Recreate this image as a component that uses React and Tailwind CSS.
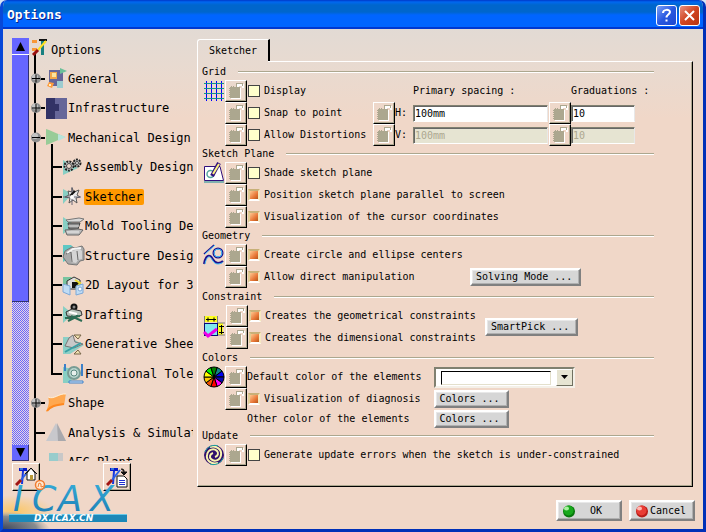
import React from "react";

const LEVELS = [
  { label: "General", level: 1, mark: "plus", icon: "general" },
  { label: "Infrastructure", level: 1, mark: "plus", icon: "infra" },
  { label: "Mechanical Design", level: 1, mark: "minus", icon: "mech" },
  { label: "Assembly Design", level: 2, icon: "gears" },
  { label: "Sketcher", level: 2, icon: "sketcher", selected: true },
  { label: "Mold Tooling Design", level: 2, icon: "mold" },
  { label: "Structure Design", level: 2, icon: "structure" },
  { label: "2D Layout for 3D Design", level: 2, icon: "layout" },
  { label: "Drafting", level: 2, icon: "drafting" },
  { label: "Generative Sheetmetal", level: 2, icon: "sheet" },
  { label: "Functional Tolerancing", level: 2, icon: "func", lastChild: true },
  { label: "Shape", level: 1, mark: "plus", icon: "shape" },
  { label: "Analysis & Simulation", level: 1, icon: "analysis" },
  { label: "AEC Plant", level: 1, icon: "aec", last: true },
];

const TEAL = "#88cfc4";

const ICONS = {
  general: (
    <>
      <rect x="3" y="2" width="14" height="16" fill="#666699" />
      <path d="M14 0l7 3-7 3z" fill="#6cc09a" />
      <rect x="4" y="4" width="7" height="7" fill="#f4a648" />
      <rect x="6" y="5" width="4" height="4" fill="#fce4a0" />
      <rect x="11" y="13" width="6" height="7" fill="#9cccd0" />
      <path d="M1 18l2-4 5 1-2 5z" fill="#ff9c3c" />
      <rect x="3" y="16" width="2" height="2" fill="#fff0c0" />
    </>
  ),
  infra: (
    <>
      <rect width="21" height="21" fill="#666699" />
      <path d="M0 1l1-1h8v6h4v7H9v8H0z" fill="#333366" />
    </>
  ),
  mech: (
    <>
      <path d="M0 2l3 1 16 7-16 7-3 1z" fill="#98cc98" />
      <path d="M12 7l8 3-8 4z" fill="#b8e4dc" />
    </>
  ),
  gears: (
    <>
      <path d="M0 3l15 8-15 7z" fill={TEAL} />
      <circle cx="6" cy="9" r="4.5" fill="#d8d8d8" stroke="#222" strokeWidth="2" strokeDasharray="2 1" />
      <circle cx="14" cy="6" r="3.5" fill="#c0c0c0" stroke="#222" strokeWidth="2" strokeDasharray="2 1" />
      <circle cx="6" cy="9" r="2.5" fill="#ecd8cc" stroke="#444" />
      <circle cx="14" cy="6" r="1.5" fill="#eee" stroke="#444" />
    </>
  ),
  sketcher: (
    <>
      <path d="M0 3l9 5-9 10z" fill={TEAL} />
      <path d="M9 2l2 4 5-2-2 5 3 2-4 1 1 5-4-3-4 3 1-5-5-1 4-2-1-4 4 1z" fill="#e8e8e8" stroke="#555" />
      <path d="M9 1v18M0 11h18" stroke="#667" />
      <path d="M12 5L7 10" stroke="#111" strokeWidth="2" />
      <circle cx="9" cy="11" r="2" fill="#fff" />
    </>
  ),
  mold: (
    <>
      <path d="M0 1l12 8-12 9z" fill={TEAL} />
      <path d="M3 4l13-2 5 1-4 3H5z" fill="#d8d8d8" stroke="#777" />
      <path d="M5 7h12l-2 6H6z" fill="#888" stroke="#444" />
      <path d="M2 14l13-1 5 1-4 5H4z" fill="#bbb" stroke="#666" />
      <path d="M5 10h11M4 16h12" stroke="#eee" />
    </>
  ),
  structure: (
    <>
      <path d="M0 0h8l8 8-16 9z" fill="#60c8c4" />
      <path d="M2 6l7-4 3 1 7-2 2 3v11l-4 1-3 4-9-1-5-7z" fill="#aaa" stroke="#777" />
      <path d="M8 6l9-2 2 2v8l-4 1-2 3-5-1z" fill="#d4d4d4" />
      <path d="M3 9l5-2 1 10M14 6l1 9" fill="none" stroke="#666" />
      <path d="M4 8l6-4 8-1" fill="none" stroke="#f4f4f4" strokeWidth="2" />
    </>
  ),
  layout: (
    <>
      <path d="M0 2h8l8 7H0z" fill="#78c4a0" />
      <path d="M4 6l7-4 6 3v9H4z" fill="#ddd" stroke="#333" />
      <path d="M9 7h7v6H9z" fill="#111" />
      <path d="M12 5l5 3-4 5" fill="none" stroke="#eadb30" strokeWidth="2" />
      <path d="M0 9l7 2v9l-7-3zM13 11l7-2v9l-7 2z" fill="#c0dcf4" stroke="#7ca8d8" />
      <circle cx="17" cy="14" r="2" fill="#fff" stroke="#7ca8d8" />
    </>
  ),
  drafting: (
    <>
      <path d="M0 2l10 8-10 9z" fill={TEAL} />
      <circle cx="11" cy="3" r="2.5" fill="#888" stroke="#111" strokeWidth="2" />
      <path d="M3 8l6-3 9 2 1 4-5 2-10-1z" fill="#b8c4bc" stroke="#333" />
      <path d="M2 14l15-2M5 17l10-5M8 12l11 5" stroke="#2b6c54" strokeWidth="2" />
      <path d="M6 8l8 2" stroke="#fff" strokeWidth="2" />
    </>
  ),
  sheet: (
    <>
      <path d="M0 3h6l15 8-14 9H0z" fill="#8ccfc6" />
      <path d="M6 4l4-3 2 7 8 2-9 4-9-2z" fill="#c8c8c8" stroke="#777" />
      <path d="M11 1h7l-3 4zM11 20h7l-3-4z" fill="#f0e0b0" stroke="#776648" />
      <path d="M2 18L18 9" stroke="#38a0a4" strokeWidth="2" />
    </>
  ),
  func: (
    <>
      <path d="M0 4l10 2-2 14H0z" fill={TEAL} />
      <circle cx="11" cy="10" r="6" fill="#b8d4cc" stroke="#789c94" strokeWidth="2" />
      <circle cx="11" cy="10" r="3" fill="#e8f0ec" stroke="#5c8880" />
      <path d="M2 1v7M19 1v12" stroke="#3c80c8" strokeWidth="2" />
      <path d="M6 18h14v2H6z" fill="#dfe8f4" stroke="#3c80c8" />
    </>
  ),
  shape: (
    <>
      <path d="M2 4c6 3 11-4 18-3-1 4-1 7-2 11-6 0-11 1-18 7 2-6 4-9 2-15z" fill="#ffa850" />
      <path d="M1 18c3-5 9-6 17-7" fill="none" stroke="#ff8820" strokeWidth="2" />
      <path d="M2 4c6 3 11-4 18-3" fill="none" stroke="#fff0d8" />
    </>
  ),
  analysis: (
    <>
      <path d="M10 1l10 18H0z" fill="#c8c8cc" />
      <path d="M11 1l9 18H12z" fill="#a8a8ac" />
    </>
  ),
  aec: (
    <>
      <rect x="3" y="1" width="9" height="19" fill="#98cccc" />
      <rect x="12" y="1" width="5" height="19" fill="#c8c8c8" />
    </>
  ),
};

function TreeIcon({ name }) {
  return (
    <svg width="21" height="21" viewBox="0 0 21 21" className="shrink-0 overflow-visible" aria-hidden="true">
      {ICONS[name]}
    </svg>
  );
}

function Gutter({ branch = true, mark, end }) {
  return (
    <svg className="h-full w-[14px] shrink-0 overflow-visible" aria-hidden="true" shapeRendering="crispEdges">
      <line x1="4" x2="4" y1="0" y2={end ? "50%" : "100%"} stroke="#000" strokeWidth="2" />
      {branch && <line x1="3" x2="14" y1="50%" y2="50%" stroke="#000" strokeWidth="2" />}
      {mark && (
        <g shapeRendering="auto">
          <circle cx="5" cy="50%" r="5" fill="#8e8e8e" />
          <circle cx="4" cy="45%" r="3" fill="#c4c4c4" />
          <line x1="1" x2="9" y1="50%" y2="50%" stroke="#000" />
          {mark === "plus" && <line x1="5" x2="5" y1="36%" y2="64%" stroke="#000" />}
        </g>
      )}
    </svg>
  );
}

function TreeRow({ item }) {
  return (
    <li
      role="treeitem"
      aria-level={item.level + 1}
      aria-selected={!!item.selected}
      className="flex h-[29px] shrink-0 items-center whitespace-nowrap even:h-[30px]"
    >
      {item.level === 1 ? (
        <Gutter mark={item.mark} end={item.last} />
      ) : (
        <span className="flex h-full shrink-0 gap-[3px]">
          <Gutter branch={false} />
          <Gutter end={item.lastChild} />
        </span>
      )}
      <span className="relative ml-px flex h-full shrink-0 items-center">
        {item.mark === "minus" && <span className="absolute bottom-0 left-[5px] h-2 w-[2px] bg-black" />}
        <TreeIcon name={item.icon} />
      </span>
      <span className={item.selected ? "rounded-[2px] bg-[#ff9900] px-px leading-4" : "ml-px leading-4"}>
        {item.label}
      </span>
    </li>
  );
}

function ToolIcon({ kind }) {
  return (
    <svg width="22" height="22" viewBox="0 0 22 22" aria-hidden="true">
      <path d="M4 2h8v3H4z" fill="#0818c8" />
      <path d="M8 5l-1 13" stroke="#1838e0" strokeWidth="2" />
      <path d="M5 3h3" stroke="#58d0f0" />
      <path d="M14 4L6 14" stroke="#2a60e8" strokeWidth="2" />
      <path d="M6 14l-5 5" stroke="#a01414" strokeWidth="3" />
      {kind === "home" ? (
        <>
          <path d="M12 7v7h8V7l-4-5z" fill="#fff" stroke="#111" />
          <path d="M10 8l6-6 6 6" fill="none" stroke="#111" />
          <rect x="15" y="9" width="3" height="5" fill="#b89838" />
        </>
      ) : (
        <>
          <path d="M11 10h7l3 3v8H11z" fill="#fff" stroke="#111" />
          <path d="M13 14.500h6M13 16.500h6M13 18.500h6" stroke="#2030d0" />
          <path d="M15 3c3 0 3 1 3 3M15 6l3 3 3-3z" fill="#111" stroke="#111" />
        </>
      )}
    </svg>
  );
}

function ToolButton({ label, kind }) {
  return (
    <button
      type="button"
      aria-label={label}
      className="flex size-7 items-center justify-center border border-t-white border-r-black border-b-black border-l-white shadow-[inset_-1px_-1px_0_#aca78f]"
    >
      <ToolIcon kind={kind} />
    </button>
  );
}

function Lock() {
  return (
    <button
      type="button"
      aria-label="Lock setting"
      className="h-[22px] w-[22px] shrink-0 border border-t-white border-r-black border-b-black border-l-white shadow-[inset_-1px_-1px_0_#aca78f]"
    >
      <svg width="20" height="20" viewBox="0 0 20 20" shapeRendering="crispEdges" aria-hidden="true">
        <path d="M5 7h10v11H5z" fill="#fff" />
        <path d="M11 3h7v4h-2V5h-3v3h-2z" fill="#fff" />
        <path d="M10 2h7v3h-1V3h-5v3h-1z" fill="#aca78f" />
        <path d="M4 6h10v11H4z" fill="#aca78f" />
        <path d="M3 7v1h1V7zM3 9v1h1V9zM3 11v1h1v-1zM3 13v1h1v-1zM3 15v1h1v-1zM5 5h1v1H5zM7 5h1v1H7z" fill="#aca78f" />
      </svg>
    </button>
  );
}

function Check({ label, checked }) {
  return (
    <label className="flex items-center gap-1 pl-px whitespace-nowrap">
      <input
        type="checkbox"
        defaultChecked={checked}
        className="size-3 shrink-0 appearance-none border border-[#444] bg-[#ffffcc] checked:border-2 checked:border-t-[#c8b078] checked:border-r-[#f6e8c0] checked:border-b-white checked:border-l-[#e0cc94] checked:bg-[linear-gradient(135deg,#ffc890,#e87838_60%,#b85818)]"
      />
      {label}
    </label>
  );
}

function OptionRow({ label, checked }) {
  return (
    <div className="flex h-[22px] items-center">
      <Lock />
      <Check label={label} checked={checked} />
    </div>
  );
}

function Section({ title, icon, middle, children }) {
  return (
    <section>
      <div className="flex h-4 items-center gap-3">
        <h2 className="leading-3">{title}</h2>
        <span className="h-[2px] flex-1 border-b border-white bg-[#aca78f]" />
      </div>
      <div className="flex">
        <div className={middle ? "w-6 shrink-0 self-center pl-px" : "w-[23px] shrink-0 pl-px"}>{icon}</div>
        <div className="min-w-0 flex-1 leading-3">{children}</div>
      </div>
    </section>
  );
}

const BEVEL =
  "border-2 border-t-white border-r-[#808080] border-b-[#808080] border-l-white bg-[#d6d6d6] shadow-[inset_-1px_-1px_0_#b0b0b0,inset_1px_1px_0_#e8e8e8] whitespace-nowrap";

function PushButton({ children }) {
  return (
    <button type="button" className={`${BEVEL} h-[18px] pr-[7px] pl-1 leading-3`}>
      {children}
    </button>
  );
}

const FIELD =
  "h-[17px] min-w-0 border border-t-[#808070] border-l-[#808070] border-r-[#e8e8e8] border-b-white bg-white pl-px shadow-[inset_1px_1px_0_#666] outline-none disabled:bg-[#e6e4d2] disabled:text-[#aca78f]";

function SpacingRow({ label, axis, disabled }) {
  return (
    <div className="flex h-[22px] items-center pr-[19px]">
      <div className="flex w-[148px] shrink-0 items-center">
        <Lock />
        <Check label={label} />
      </div>
      <Lock />
      <label htmlFor={`spacing-${axis}`} className="w-[18px] shrink-0">
        {axis}:
      </label>
      <input id={`spacing-${axis}`} className={`${FIELD} mr-px w-0 flex-1`} defaultValue="100mm" disabled={disabled} />
      <Lock />
      <input aria-label={`Graduations ${axis}`} className={`${FIELD} w-16`} defaultValue="10" disabled={disabled} />
    </div>
  );
}

const GridIcon = (
  <svg width="22" height="22" viewBox="0 0 22 22" shapeRendering="crispEdges" aria-hidden="true">
    <path d="M1 3.500h20M1 8.500h20M1 13.500h20M1 18.500h20" stroke="#109090" />
    <path d="M3.500 1v20M8.500 1v20M13.500 1v20M18.500 1v20" stroke="#0000ff" />
    <path d="M2 3.500h20M2 8.500h20M2 13.500h20M2 18.500h20" stroke="#109090" strokeDasharray="3 2" />
  </svg>
);

const PlaneIcon = (
  <svg width="22" height="22" viewBox="0 0 22 22" aria-hidden="true">
    <path d="M1.500 4.500H17l3.500 14h-19z" fill="#fff" stroke="#30107c" />
    <path d="M1 20h20" stroke="#108c98" />
    <circle cx="7.500" cy="12" r="3.500" fill="none" stroke="#58a8a0" strokeWidth="1.500" />
    <path d="M16 1L9 14" stroke="#30107c" strokeWidth="4" />
    <path d="M16 2l-6 10" stroke="#fff480" strokeWidth="2" />
  </svg>
);

const CurveIcon = (
  <svg width="22" height="22" viewBox="0 0 22 22" fill="none" aria-hidden="true">
    <path d="M1 10l10-9" stroke="#20108c" strokeWidth="1.500" />
    <path d="M2 10l10-9" stroke="#40c0f8" />
    <circle cx="15" cy="9" r="4.500" stroke="#20108c" strokeWidth="2" />
    <circle cx="15" cy="9" r="4" stroke="#40c0f8" />
    <path d="M1 20c1-6 3-9 6-8s3 7 8 7c3 0 5-2 5-2" stroke="#20108c" strokeWidth="2" />
    <path d="M2 20c1-5 3-8 5-7s3 7 8 7c3 0 5-2 5-2" stroke="#40c0f8" />
  </svg>
);

const ConstraintIcon = (
  <svg width="22" height="22" viewBox="0 0 22 22" aria-hidden="true">
    <path d="M1 0h14v6H1zM15 7h5v12h-5z" fill="#ffff20" />
    <path d="M1.500 0v8M14.500 0v8M15 7h7M15 19h7" stroke="#808080" />
    <path d="M3 3.500h10M5 1.500v4M11 1.500v4M18.500 9v9M16 10.500h5M16 16.500h5" stroke="#000" />
    <rect x="1.500" y="7.500" width="13" height="12" fill="#80e8f0" stroke="#080878" />
    <path d="M1 16l4 4 9-7" fill="none" stroke="#ee00e8" strokeWidth="3" />
  </svg>
);

const WHEEL = ["#108484", "#0000f0", "#0808b0", "#ff00ff", "#ff0000", "#f05000", "#ffc800", "#ffff00", "#00f000", "#008000"];
const wedge = (i) => {
  const at = (k) => {
    const a = ((k * 36 - 72) * Math.PI) / 180;
    return `${(11 + 10 * Math.cos(a)).toFixed(2)} ${(11 + 10 * Math.sin(a)).toFixed(2)}`;
  };
  return `M11 11L${at(i)}A10 10 0 0 1 ${at(i + 1)}z`;
};
const WheelIcon = (
  <svg width="22" height="22" viewBox="0 0 22 22" aria-hidden="true">
    {WHEEL.map((c, i) => (
      <path key={c} d={wedge(i)} fill={c} stroke="#000" />
    ))}
  </svg>
);

const UpdateIcon = (
  <svg width="22" height="22" viewBox="0 0 22 22" fill="none" aria-hidden="true">
    <circle cx="11" cy="11" r="10" fill="#30106c" />
    <path d="M7 3c7-2 12 3 11 8-1 6-7 7-10 4-2-2-1-5 2-6" stroke="#f8f4b0" strokeWidth="2" />
    <path d="M15 19C8 21 3 16 4 11c1-6 7-7 10-4 2 2 1 5-2 6" stroke="#f8f4b0" strokeWidth="2" />
    <path d="M2 8c2-5 8-8 13-6M20 14c-2 5-8 8-13 6" stroke="#18a0a0" />
  </svg>
);

function Ball({ red }) {
  return (
    <svg width="14" height="14" viewBox="0 0 14 14" aria-hidden="true">
      <circle cx="7" cy="7.500" r="6" fill={red ? "#b81c18" : "#08780c"} />
      <circle cx="6.500" cy="6.500" r="5" fill={red ? "#e83c34" : "#18a81c"} />
      <ellipse cx="4.500" cy="4.500" rx="2.500" ry="2" fill={red ? "#ffb8b0" : "#a8f0a0"} />
    </svg>
  );
}

function Logo() {
  return (
    <svg width="128" height="54" viewBox="0 0 128 54" aria-label="ICAX" role="img">
      <defs>
        <radialGradient id="glow">
          <stop offset="0" stopColor="#ffc040" />
          <stop offset="1" stopColor="#ffc040" stopOpacity="0" />
        </radialGradient>
        <linearGradient id="ice" x1="0" y1="0" x2="0" y2="1">
          <stop offset="0" stopColor="#38b0dc" />
          <stop offset="1" stopColor="#1878b0" />
        </linearGradient>
        <radialGradient id="earth" cx="0" cy="1" r="1">
          <stop offset="0" stopColor="#40485c" />
          <stop offset=".7" stopColor="#888c90" />
          <stop offset="1" stopColor="#c0b4a8" stopOpacity="0" />
        </radialGradient>
      </defs>
      <ellipse cx="12" cy="36" rx="40" ry="16" fill="url(#glow)" opacity=".7" />
      <path d="M0 36c18 0 38 6 48 18H0z" fill="url(#earth)" />
      <text y="36" x="10 29 55 87" fontFamily="'DejaVu Sans'" fontStyle="italic" fontSize="35" fill="url(#ice)">
        ICAX
      </text>
      <rect x="6" y="39" width="118" height="8" fill="#1c88b8" />
      <path d="M6 39.500h118" stroke="#68c8e8" />
      <text x="31" y="46" fontFamily="'DejaVu Sans'" fontWeight="bold" fontStyle="italic" fontSize="9" fill="#fff">
        DX.ICAX.CN
      </text>
      <circle cx="37" cy="10" r="4.500" fill="#ffe8d0" stroke="#f07c30" strokeWidth="1.500" />
      <path d="M35 12l1-4 2 1v3l3-1" fill="none" stroke="#f07c30" />
    </svg>
  );
}

export default function App() {
  return (
    <div className="flex min-h-screen flex-col bg-[#d8e4f4] font-['DejaVu_Sans_Mono',monospace] text-[10px] text-black">
      <div className="relative flex flex-1 flex-col overflow-hidden rounded-t-[7px] border-x-[3px] border-b-[3px] border-[#0848d8] border-r-[#0030b8] border-b-[#0030b8] bg-[#f0d7c8]">
        <header className="-mx-[3px] flex h-[29px] shrink-0 items-center justify-between border-b-2 border-[#0038d0] bg-[linear-gradient(#0038c8_0,#0068f0_2px,#0066cc_5px,#0066cc_12px,#0065ff_15px,#0065ff_100%)] pt-[3px] pr-[6px] pl-[7px]">
          <h1 className="text-[13px] leading-4 font-bold text-white [text-shadow:1px_1px_#0c2080]">Options</h1>
          <div className="flex gap-[2px]">
            <button type="button" aria-label="Help" className="flex size-[21px] items-center justify-center rounded-[3px] border border-white bg-[linear-gradient(135deg,#7ca0f8,#2858e0_50%,#1c48d0)] text-white">
              <svg width="13" height="15" viewBox="0 0 13 15" fill="none" stroke="#fff" strokeWidth="2" aria-hidden="true">
                <path d="M3 5c0-4 7-4 7-1 0 2-3.500 2.500-3.500 5.500M6.500 11.500v2" />
              </svg>
            </button>
            <button type="button" aria-label="Close" className="flex size-[21px] items-center justify-center rounded-[3px] border border-white bg-[linear-gradient(135deg,#e89080,#d04420_50%,#b83410)]">
              <svg width="13" height="13" viewBox="0 0 13 13" stroke="#fff" strokeWidth="2" aria-hidden="true">
                <path d="M2 2l9 9M11 2l-9 9" />
              </svg>
            </button>
          </div>
        </header>

        <main className="flex flex-1 bg-[linear-gradient(#e2dad4,#e8dad0_36px,#f0d7c8_90px)] pt-[9px] pr-[10px] pl-[9px]">
          <div className="flex w-[181px] shrink-0 flex-col gap-[2px]">
            <div className="flex h-[423px]">
              <div className="flex w-[17px] shrink-0 flex-col">
                <button type="button" aria-label="Scroll up" className="flex h-[17px] shrink-0 items-center justify-center border-b border-white bg-[#6666ff]">
                  <svg width="9" height="9" aria-hidden="true"><path d="M4.500 0L9 9H0z" /></svg>
                </button>
                <div className="h-[247px] shrink-0 border-r border-b border-[#303070] bg-[#6666ff]" />
                <svg className="min-h-0 w-full flex-1" shapeRendering="crispEdges" aria-hidden="true">
                  <defs>
                    <pattern id="track" width="2" height="2" patternUnits="userSpaceOnUse">
                      <rect width="2" height="2" fill="#e8d8e0" />
                      <rect width="1" height="1" fill="#6666ff" />
                      <rect x="1" y="1" width="1" height="1" fill="#6666ff" />
                    </pattern>
                  </defs>
                  <rect width="100%" height="100%" fill="url(#track)" />
                </svg>
                <button type="button" aria-label="Scroll down" className="flex h-4 shrink-0 items-center justify-center border-r border-b border-[#303070] bg-[#6666ff]">
                  <svg width="9" height="9" aria-hidden="true"><path d="M4.500 9L9 0H0z" /></svg>
                </button>
              </div>
              <div className="ml-[2px] min-w-0 flex-1 overflow-hidden text-[12px]">
                <div className="flex h-[26px] items-start">
                  <svg width="17" height="26" viewBox="0 0 17 26" className="shrink-0" aria-hidden="true">
                    <path d="M3 14h2v12H3z" />
                    <path d="M1 2h5v3H1zM1 10h5v3H1z" fill="#f89838" />
                    <path d="M8 1h8v2H8z" fill="#111" />
                    <path d="M10 3h3v14h-3z" fill="#188080" />
                    <path d="M15 3l-8 9" stroke="#ffe020" strokeWidth="2" />
                    <path d="M7 12l-5 5" stroke="#981010" strokeWidth="3" />
                  </svg>
                  <span className="pl-[3px] leading-6">Options</span>
                </div>
                <ul role="tree" aria-label="Options" className="flex flex-col">
                  {LEVELS.map((item) => (
                    <TreeRow key={item.label} item={item} />
                  ))}
                </ul>
              </div>
            </div>
            <div className="flex gap-[63px]">
              <ToolButton label="Reset to defaults" kind="home" />
              <ToolButton label="Dump parameters" kind="dump" />
            </div>
          </div>

          <div className="mb-1 ml-1 flex min-w-0 flex-1 flex-col pt-px">
            <div role="tablist">
              <button
                type="button"
                role="tab"
                aria-selected="true"
                className="block h-[22px] w-[73px] rounded-tl-[3px] border-t border-r-2 border-l border-t-white border-r-black border-l-white"
              >
                Sketcher
              </button>
            </div>
            <div className="relative flex-1 border border-t-white border-r-black border-b-black border-l-white pt-[2px] pr-[38px] pl-1 shadow-[inset_-1px_-1px_0_#aca78f]">
              <span className="absolute -top-px left-0 h-px w-[70px] bg-[#e8dad0]" />
              <Section title="Grid" icon={GridIcon}>
                <div className="flex h-[22px] items-center pr-[19px]">
                  <div className="flex w-[188px] shrink-0 items-center">
                    <Lock />
                    <Check label="Display" />
                  </div>
                  <span className="flex-1 whitespace-nowrap">Primary spacing :</span>
                  <span className="w-16 whitespace-nowrap">Graduations :</span>
                </div>
                <SpacingRow label="Snap to point" axis="H" />
                <SpacingRow label="Allow Distortions" axis="V" disabled />
              </Section>

              <Section title="Sketch Plane" icon={PlaneIcon}>
                <OptionRow label="Shade sketch plane" />
                <OptionRow label="Position sketch plane parallel to screen" checked />
                <OptionRow label="Visualization of the cursor coordinates" checked />
              </Section>

              <Section title="Geometry" icon={CurveIcon}>
                <OptionRow label="Create circle and ellipse centers" checked />
                <div className="flex items-center">
                  <div className="w-[245px]">
                    <OptionRow label="Allow direct manipulation" checked />
                  </div>
                  <PushButton>Solving Mode ...</PushButton>
                </div>
              </Section>

              <div className="py-px">
                <Section title="Constraint" icon={ConstraintIcon} middle>
                  <div className="flex items-center">
                    <div className="w-[259px]">
                      <OptionRow label="Creates the geometrical constraints" checked />
                      <OptionRow label="Creates the dimensional constraints" checked />
                    </div>
                    <PushButton>SmartPick ...</PushButton>
                  </div>
                </Section>
              </div>

              <Section title="Colors" icon={WheelIcon}>
                <div className="flex h-[22px] items-center">
                  <Lock />
                  <label htmlFor="default-color" className="w-[187px] whitespace-nowrap">
                    Default color of the elements
                  </label>
                  <span className="relative h-[21px] w-[141px]">
                    <select
                      id="default-color"
                      className="size-full appearance-none border-2 border-t-[#808070] border-r-[#f4f0e8] border-b-[#f4f0e8] border-l-[#808070] bg-white"
                    >
                      <option aria-label="White" />
                    </select>
                    <span className="pointer-events-none absolute top-1 left-[7px] h-[14px] w-[110px] border border-t-black border-r-[#e4e0cc] border-b-[#e4e0cc] border-l-black bg-white" />
                    <span className="pointer-events-none absolute top-[2px] right-[2px] flex h-[17px] w-[17px] items-center justify-center border border-t-white border-r-[#707060] border-b-[#707060] border-l-white bg-[#e6e4d2]">
                      <svg width="7" height="4" aria-hidden="true"><path d="M0 0h7L3.500 4z" /></svg>
                    </span>
                  </span>
                </div>
                <div className="flex h-[22px] items-center">
                  <div className="w-[209px]">
                    <OptionRow label="Visualization of diagnosis" checked />
                  </div>
                  <button type="button" aria-label="Diagnosis colors" className={`${BEVEL} h-[18px] w-[75px] pr-1 leading-3`}>Colors ...</button>
                </div>
                <div className="flex h-[18px] items-center pl-[22px]">
                  <span className="w-[187px] whitespace-nowrap">Other color of the elements</span>
                  <button type="button" aria-label="Element colors" className={`${BEVEL} h-[18px] w-[75px] pr-1 leading-3`}>Colors ...</button>
                </div>
              </Section>

              <Section title="Update" icon={UpdateIcon}>
                <OptionRow label="Generate update errors when the sketch is under-constrained" />
              </Section>
            </div>
          </div>
        </main>

        <footer className="flex h-[38px] shrink-0 items-start justify-end gap-[7px] pt-[9px] pr-2">
          <button type="button" className={`${BEVEL} flex h-[21px] w-[66px] items-center pl-1`}>
            <Ball />
            <span className="flex-1 pr-1 text-center">OK</span>
          </button>
          <button type="button" className={`${BEVEL} flex h-[21px] w-[66px] items-center gap-px pl-1`}>
            <Ball red />
            Cancel
          </button>
        </footer>
        <div className="pointer-events-none absolute bottom-0 left-0">
          <Logo />
        </div>
      </div>
    </div>
  );
}
